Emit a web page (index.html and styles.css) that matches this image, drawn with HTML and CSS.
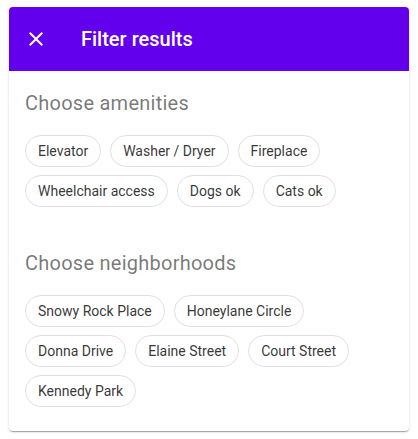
FILE: index.html
```html
<!DOCTYPE html>
<html lang="en">
<head>
    <meta charset="UTF-8">
    <meta name="viewport" content="width=device-width, initial-scale=1.0">
    <title>Filter results</title>
    <link rel="stylesheet" href="styles.css">
</head>
<body>
    <div class="card">
        <header class="app-bar">
            <button class="close-btn" aria-label="Close">
                <svg width="24" height="24" viewBox="0 0 24 24">
                    <path fill="#fff" d="M19 6.41L17.59 5 12 10.59 6.41 5 5 6.41 10.59 12 5 17.59 6.41 19 12 13.41 17.59 19 19 17.59 13.41 12z"/>
                </svg>
            </button>
            <div class="title">Filter results</div>
        </header>
        <div class="content">
            <h2 class="section-title">Choose amenities</h2>
            <div class="chip-set">
                <span class="chip">Elevator</span>
                <span class="chip">Washer / Dryer</span>
                <span class="chip">Fireplace</span>
                <span class="chip">Wheelchair access</span>
                <span class="chip">Dogs ok</span>
                <span class="chip">Cats ok</span>
            </div>

            <h2 class="section-title spaced">Choose neighborhoods</h2>
            <div class="chip-set">
                <span class="chip">Snowy Rock Place</span>
                <span class="chip">Honeylane Circle</span>
                <span class="chip">Donna Drive</span>
                <span class="chip">Elaine Street</span>
                <span class="chip">Court Street</span>
                <span class="chip">Kennedy Park</span>
            </div>
        </div>
    </div>
</body>
</html>
```

FILE: styles.css
```css
body {
    margin: 0;
    font-family: Roboto, 'Noto Sans', sans-serif;
    background: #fff;
}

.card {
    margin: 7px 9px;
    width: 400px;
    border-radius: 4px;
    overflow: hidden;
    background: #fff;
    box-shadow: 0 2px 1px -1px rgba(0, 0, 0, 0.2), 0 1px 1px 0 rgba(0, 0, 0, 0.14), 0 1px 3px 0 rgba(0, 0, 0, 0.12);
}

.app-bar {
    height: 64px;
    background-color: #6200ee;
    display: flex;
    align-items: center;
    color: #fff;
}

.close-btn {
    border: none;
    background: none;
    padding: 0;
    margin-left: 15px;
    width: 24px;
    height: 24px;
    display: flex;
}

.title {
    margin-left: 33px;
    font-size: 20px;
    font-weight: 500;
}

.content {
    padding: 16px 16px 24px;
}

.section-title {
    margin: 0 0 16px;
    font-size: 20px;
    line-height: 32px;
    font-weight: 400;
    color: rgba(0, 0, 0, 0.54);
    letter-spacing: 0.25px;
}

.section-title.spaced {
    margin-top: 40px;
}

.chip-set {
    display: flex;
    flex-wrap: wrap;
    gap: 8px 9px;
}

.chip {
    display: inline-flex;
    align-items: center;
    height: 32px;
    box-sizing: border-box;
    padding: 0 12px;
    border: 1px solid #e0e0e0;
    border-radius: 16px;
    font-size: 14px;
    color: rgba(0, 0, 0, 0.8);
}
```
